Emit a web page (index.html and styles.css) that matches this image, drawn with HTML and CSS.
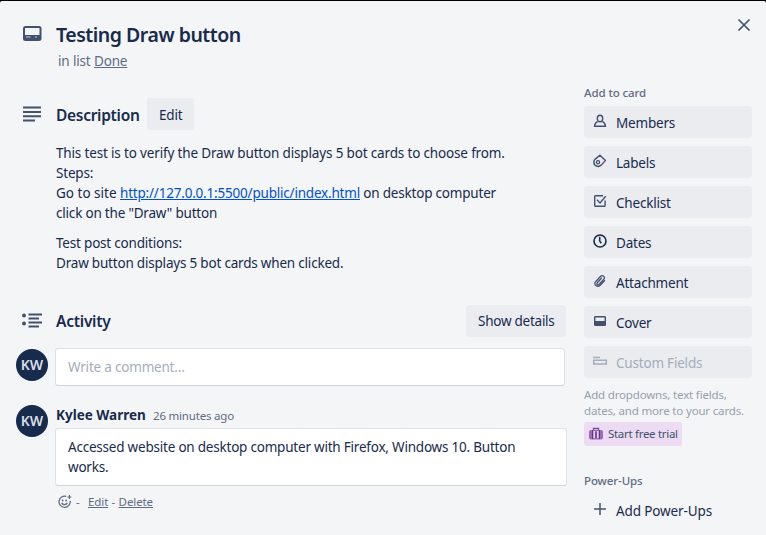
FILE: index.html
```html
<!DOCTYPE html>
<html lang="en">
<head>
<meta charset="utf-8">
<title>Testing Draw button</title>
<link rel="stylesheet" href="styles.css">
</head>
<body>
<div class="card">
  <button class="close" aria-label="Close"><svg width="14" height="14" viewBox="0 0 14 14"><path d="M1.500 1.500l11 11M12.500 1.500l-11 11" fill="none" stroke="currentColor" stroke-width="1.700"/></svg></button>
  <header class="head">
    <svg class="section-icon" width="20" height="20" viewBox="0 0 20 20"><rect x="2" y="3" width="16.500" height="13" rx="1.500" fill="none" stroke="currentColor" stroke-width="2"/><path d="M2 11h16.500v5H2z" fill="currentColor"/><path d="M4 13h4.500M13 13h2" stroke="#c3c9d3" stroke-width="1.200"/></svg>
    <h1>Testing Draw button</h1>
    <p class="in-list">in list <a href="#">Done</a></p>
  </header>
  <div class="columns">
    <main class="main">
      <section class="description">
        <div class="section-head">
          <svg class="section-icon" width="20" height="20" viewBox="0 0 20 20"><path d="M1 3.500h18M1 8h18M1 12.200h18M1 16.500h12" fill="none" stroke="currentColor" stroke-width="1.900"/></svg>
          <h2>Description</h2>
          <button class="btn edit">Edit</button>
        </div>
        <div class="prose">
          <p><span class="opening">This test is to verify the Draw button displays 5 bot cards to choose from.</span><br>Steps:<br><span class="lead">Go to site </span><a href="#">http://127.0.0.1:5500/public/index.html</a> on desktop computer<br>click on the "Draw" button</p>
          <p>Test post conditions:<br>Draw button displays 5 bot cards when clicked.</p>
        </div>
      </section>
      <section class="activity">
        <div class="section-head">
          <svg class="section-icon" width="22" height="20" viewBox="0 0 22 20"><path d="M6.500 3.500H20M6.500 7.500H17M6.500 11.500H20M6.500 15.500H17" fill="none" stroke="currentColor" stroke-width="1.900"/><circle cx="2" cy="4.500" r="2" fill="currentColor"/><circle cx="2" cy="12.500" r="2" fill="currentColor"/></svg>
          <h2>Activity</h2>
          <button class="btn details">Show details</button>
        </div>
        <div class="write"><div class="avatar">KW</div><div class="input">Write a comment…</div></div>
        <div class="comment">
          <div class="avatar">KW</div>
          <div class="comment-body">
            <div class="by"><b>Kylee Warren</b><span class="time">26 minutes ago</span></div>
            <div class="bubble">Accessed website on desktop computer with Firefox, Windows 10. Button<br>works.</div>
            <div class="actions"><svg width="14" height="14" viewBox="0 0 14 14"><path d="M8.300 1.400A5.600 5.600 0 1 0 12.100 5.800" fill="none" stroke="currentColor" stroke-width="1.300"/><path d="M3.600 8q2.900 3.400 5.800 0M11.400 0v4M9.400 2h4" fill="none" stroke="currentColor" stroke-width="1.200"/><circle cx="4.700" cy="5.500" r=".9" fill="currentColor"/><circle cx="8.200" cy="5.500" r=".9" fill="currentColor"/></svg><span class="dash">-</span><a class="edit-link" href="#">Edit</a><span class="dash2">-</span><a href="#">Delete</a></div>
          </div>
        </div>
      </section>
    </main>
    <aside class="side">
      <h3>Add to card</h3>
      <button class="btn item"><svg width="16" height="16" viewBox="0 0 16 16"><g fill="none" stroke="currentColor" stroke-width="1.400"><path d="M5.700 8.600C3.600 9.300 2.600 10.800 2.600 13.200h10.800c0-2.400-1-3.900-3.100-4.600"/><ellipse cx="8" cy="5.500" rx="2.700" ry="3.300"/></g></svg>Members</button>
      <button class="btn item"><svg width="16" height="16" viewBox="0 0 16 16"><path d="M7.900 2.200l5.600 5.200-4.200 4.700C6.200 15.100 1.200 12.500 2 8.300q.2-1.200 1.300-2.200z" fill="none" stroke="currentColor" stroke-width="1.400" stroke-linejoin="round"/><circle cx="6" cy="9.200" r="1.600" fill="none" stroke="currentColor" stroke-width="1.300"/></svg>Labels</button>
      <button class="btn item"><svg width="16" height="16" viewBox="0 0 16 16"><path d="M11 2.800H3.500q-.8 0-.8.8v8.800q0 .8.8.8h8.800q.8 0 .8-.8V7.500M5 6.800l3 3.200 5.700-6.800" fill="none" stroke="currentColor" stroke-width="1.400"/></svg>Checklist</button>
      <button class="btn item dark"><svg width="16" height="16" viewBox="0 0 16 16"><circle cx="8" cy="8" r="6" fill="none" stroke="currentColor" stroke-width="1.600"/><path d="M7.700 3.800V8l1.600 2.200" fill="none" stroke="currentColor" stroke-width="1.500"/></svg>Dates</button>
      <button class="btn item"><svg width="16" height="16" viewBox="0 0 16 16"><path d="M12.900 7.200l-4.700 5.100C5.400 15 1.200 11.600 3.600 8.700l4.800-5.200c2-2.100 5.300.4 3.500 2.700l-4.700 5.100c-1.400 1.300-3-.2-1.900-1.600l4.500-4.900" fill="none" stroke="currentColor" stroke-width="1.300"/></svg>Attachment</button>
      <button class="btn item"><svg width="16" height="16" viewBox="0 0 16 16"><rect x="2.700" y="3.700" width="10.600" height="8.600" rx=".6" fill="none" stroke="currentColor" stroke-width="1.400"/><path d="M2.700 8h10.600v4.500H2.700z" fill="currentColor"/></svg>Cover</button>
      <button class="btn item disabled"><svg width="16" height="16" viewBox="0 0 16 16"><path d="M1 4.500h7M1.700 7.200h12.600v3.800H1.700z" fill="none" stroke="currentColor" stroke-width="1.500"/></svg>Custom Fields</button>
      <p class="hint">Add dropdowns, text fields,<br>dates, and more to your cards.</p>
      <button class="trial"><svg width="14" height="14" viewBox="0 0 14 14"><path d="M4.500 3V1.500h5V3" fill="none" stroke="#7b4f9d" stroke-width="1.400"/><rect y="3" width="14" height="9.500" rx="2" fill="#9b6db5"/><path d="M3.500 3v9M10.500 3v9M7 5v6" stroke="#65398a" stroke-width="1"/><path d="M5.200 4v7M8.800 4v7" stroke="#efdcf5" stroke-width="1.400"/></svg>Start free trial</button>
      <h3 class="power">Power-Ups</h3>
      <button class="btn item plain"><svg width="16" height="16" viewBox="0 0 16 16"><path d="M8 2v12M2 8h12" fill="none" stroke="currentColor" stroke-width="1.500"/></svg>Add Power-Ups</button>
    </aside>
  </div>
</div>
</body>
</html>
```
FILE: styles.css
```css
* { box-sizing: border-box; }
body {
  margin: 0;
  height: 535px;
  overflow: hidden;
  background: #000;
  color: #172b4d;
  font: 13.5px/20px "Noto Sans", "Open Sans", sans-serif;
  letter-spacing: -0.2px;
}
h1, h2, h3, p { margin: 0; white-space: nowrap; }
svg { display: block; flex: none; }
button { border: 0; padding: 0; margin: 0; background: none; font: inherit; letter-spacing: inherit; color: inherit; text-align: left; white-space: nowrap; }
.card { position: relative; height: 534px; margin-top: 1px; background: #f4f5f7; border-radius: 2px 2px 0 0; }
.close { position: absolute; top: 17px; right: 15px; color: #42526e; }
.head { position: relative; height: 84px; padding: 22px 0 0 56px; }
.section-icon { color: #42526e; }
.head .section-icon { position: absolute; left: 22px; top: 23px; }
h1 { font-size: 19.5px; line-height: 24px; font-weight: 600; letter-spacing: -0.48px; }
.in-list { margin: 4px 0 0 2px; color: #5e6c84; letter-spacing: -0.15px; }
.in-list a, .actions a { color: inherit; }
.columns { display: grid; grid-template-columns: 566px 168px; column-gap: 18px; }
.section-head { display: flex; align-items: center; height: 32px; padding-left: 22px; }
.description { padding-top: 13px; }
.section-head h2 { margin-left: 14px; font-size: 15.5px; font-weight: 600; letter-spacing: -0.3px; }
.description h2 { padding-top: 2px; }
.activity .section-head h2 { margin-left: 12px; letter-spacing: -0.25px; }
.btn { height: 32px; background: #eaecf0; border-radius: 3px; }
.edit { width: 47px; margin-left: auto; margin-right: 372px; padding: 2px 0 0 12px; }
.details { width: 100px; margin-left: auto; padding-left: 12px; letter-spacing: -0.25px; }
.prose { padding: 13px 0 0 56px; height: 143px; }
.prose p + p { margin-top: 10px; }
.prose a { color: #0052cc; }
.opening { letter-spacing: -0.16px; }
.lead { letter-spacing: 0; }
.activity { padding-top: 32px; }
.write { display: flex; align-items: flex-start; padding-left: 16px; margin-top: 11px; }
.avatar { width: 32px; height: 32px; flex: none; border-radius: 50%; background: #172b4d; color: #d9dee6; font-size: 14px; font-weight: 600; line-height: 32px; text-align: center; letter-spacing: 0; margin-top: 1px; }
.input, .bubble { background: #fff; border: 1px solid #dfe1e6; border-bottom-color: #cfd3db; border-radius: 3px; white-space: nowrap; }
.input { width: 510px; height: 38px; margin-left: 7px; padding: 8px 12px; color: #a5adba; }
.comment { display: flex; padding-left: 16px; margin-top: 18px; }
.comment-body { margin-left: 7px; }
.by { height: 24px; line-height: 22px; padding-left: 1px; white-space: nowrap; }
.time { margin-left: 8px; font-size: 11.5px; color: #5e6c84; }
.by b { display: inline-block; width: 89px; letter-spacing: 0; }
.bubble { width: 512px; height: 58px; padding: 8px 12px; letter-spacing: -0.215px; }
.actions { display: flex; align-items: center; height: 20px; margin-top: 6px; padding-left: 3px; color: #5e6c84; font-size: 11.5px; letter-spacing: -0.1px; }
.dash { width: 12px; margin-left: 4px; }
.actions .edit-link { width: 20px; white-space: nowrap; }
.dash2 { margin: 0 3.5px; }
.side { display: flex; flex-direction: column; align-items: flex-start; }
h3 { height: 21px; font-size: 11.5px; line-height: 16px; font-weight: 500; letter-spacing: -0.1px; color: #5e6c84; }
.item { display: flex; align-items: center; width: 168px; padding: 2px 0 0 8px; gap: 8px; margin-bottom: 8px; }
.item svg { color: #42526e; margin-top: -4px; }
.dark svg { color: #172b4d; }
.disabled, .disabled svg { color: #a5adba; }
.plain { background: none; letter-spacing: -0.12px; }
.hint { font-size: 11.5px; line-height: 16px; color: #97a0af; margin-top: 1px; letter-spacing: -0.17px; }
.trial { display: flex; align-items: center; gap: 5px; width: 98px; height: 24px; margin-top: 3px; padding-left: 5px; border-radius: 3px; background: #eddbf4; color: #42526e; font-size: 11.5px; letter-spacing: -0.3px; }
.power { margin-top: 27px; }
```
